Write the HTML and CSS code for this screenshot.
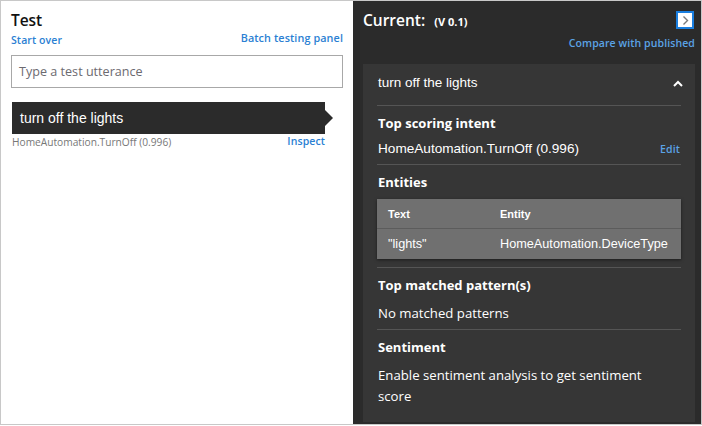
FILE: index.html
```html
<!DOCTYPE html>
<html>
<head>
<meta charset="utf-8">
<link rel="stylesheet" href="styles.css">
</head>
<body>
<div class="frame">
  <section class="left">
    <h1 class="title">Test</h1>
    <div class="links">
      <a class="link start">Start over</a>
      <a class="link batch">Batch testing panel</a>
    </div>
    <div class="input">Type a test utterance</div>
    <div class="utt">
      <div class="utt-bar">turn off the lights</div>
      <div class="utt-arrow"></div>
    </div>
    <div class="utt-meta">
      <span class="utt-intent">HomeAutomation.TurnOff (0.996)</span>
      <a class="link inspect">Inspect</a>
    </div>
  </section>
  <section class="right">
    <div class="rhead">
      <div class="cur"><span class="cur-title">Current:</span><span class="ver">(V 0.1)</span></div>
      <div class="collapse"><svg width="9" height="11" viewBox="0 0 9 11"><path d="M2.5 1.5 L6.5 5.5 L2.5 9.5" fill="none" stroke="#7a7a7a" stroke-width="1.4"/></svg></div>
    </div>
    <div class="compare"><a class="link dark">Compare with published</a></div>
    <div class="card">
      <div class="card-top">
        <span class="utt-text">turn off the lights</span>
        <svg width="10" height="7" viewBox="0 0 10 7"><path d="M1 6 L5 2 L9 6" fill="none" stroke="#fff" stroke-width="2"/></svg>
      </div>
      <div class="sec">
        <div class="sec-title">Top scoring intent</div>
        <div class="intent-row"><span class="intent">HomeAutomation.TurnOff (0.996)</span><a class="link dark edit">Edit</a></div>
      </div>
      <div class="sec">
        <div class="sec-title">Entities</div>
        <div class="table">
          <div class="trow thead"><span class="c1">Text</span><span class="c2">Entity</span></div>
          <div class="trow tbody"><span class="c1">"lights"</span><span class="c2">HomeAutomation.DeviceType</span></div>
        </div>
      </div>
      <div class="sec text-sec">
        <div class="sec-title">Top matched pattern(s)</div>
        <div class="sec-text">No matched patterns</div>
      </div>
      <div class="sec text-sec last">
        <div class="sec-title">Sentiment</div>
        <div class="sec-text wrap">Enable sentiment analysis to get sentiment score</div>
      </div>
    </div>
  </section>
</div>
</body>
</html>
```

FILE: styles.css
```css
html, body { margin: 0; padding: 0; }
body { width: 702px; height: 426px; overflow: hidden; background: #fff; font-family: "Open Sans", "Noto Sans", sans-serif; }
.frame { box-sizing: border-box; width: 702px; height: 425px; border: 1px solid #c8c8c8; display: flex; }
.left { width: 352px; box-sizing: border-box; padding: 9px 10px 0 10px; background: #fff; }
.title { margin: 0; font-size: 15.5px; font-weight: 600; color: #111; line-height: 20px; letter-spacing: -0.1px; }
.links { display: flex; justify-content: space-between; align-items: flex-start; height: 16px; }
.link { font-size: 10.5px; font-weight: 600; color: #2b7fd3; letter-spacing: 0.1px; }
.start { margin-top: 3px; }
.batch { margin-top: 0; font-size: 10.8px; }
.input { margin-top: 9px; box-sizing: border-box; height: 33px; border: 1px solid #a8a8a8; padding: 0 7px; line-height: 31px; font-size: 12.6px; color: #6c6a70; }
.utt { margin-top: 14px; display: flex; align-items: center; margin-left: 1px; }
.utt-bar { width: 313px; height: 32px; background: #2b2b2b; color: #fff; font-family: "Liberation Sans", Arial, sans-serif; font-size: 14px; line-height: 32px; padding-left: 8px; box-sizing: border-box; }
.utt-arrow { width: 0; height: 0; border-top: 8px solid transparent; border-bottom: 8px solid transparent; border-left: 8px solid #2b2b2b; }
.utt-meta { display: flex; justify-content: space-between; width: 313px; margin-left: 1px; height: 16px; }
.utt-intent { font-size: 10.2px; color: #777; margin-top: 1px; }
.inspect { font-size: 10.5px; }
.right { flex: 1; background: #2b2b2b; padding: 0 6px 2px 10px; display: flex; flex-direction: column; }
.rhead { display: flex; justify-content: space-between; align-items: flex-start; padding-top: 9px; height: 22px; }
.cur { display: flex; align-items: baseline; }
.cur-title { color: #fff; font-size: 15.5px; font-weight: 600; line-height: 20px; }
.ver { color: #fff; font-size: 11px; font-weight: 700; margin-left: 9px; }
.collapse { box-sizing: border-box; width: 18px; height: 18px; border: 2px solid #1a7fe0; background: #fff; display: flex; align-items: center; justify-content: center; margin-top: 1px; margin-right: 1px; }
.compare { text-align: right; height: 32px; line-height: 19px; }
.link.dark { color: #5ba3e6; }
.card { flex: 1; background: #363636; padding: 0 14px 0 14px; }
.card-top { display: flex; justify-content: space-between; align-items: flex-start; box-sizing: border-box; height: 42px; padding-top: 11px; border-bottom: 1px solid #555; padding-left: 1px; }
.card-top svg { margin-right: -2px; margin-top: 5px; }
.utt-text { color: #fff; font-family: "Liberation Sans", Arial, sans-serif; font-size: 13.5px; line-height: 16px; }
.sec { border-bottom: 1px solid #555; padding: 8px 0 8px 1px; }
.sec.text-sec { padding-bottom: 5px; }
.sec.last { border-bottom: 0; }
.sec-title { color: #fff; font-size: 13px; font-weight: 700; line-height: 18px; }
.intent-row { display: flex; justify-content: space-between; align-items: center; margin-top: 9px; }
.intent { color: #fff; font-family: "Liberation Sans", Arial, sans-serif; font-size: 13.6px; }
.edit { font-size: 10.5px; margin-right: 1px; }
.table { margin-top: 8px; margin-left: -1px; background: #707070; box-shadow: 0 1px 3px rgba(0,0,0,0.5); }
.trow { display: flex; align-items: center; color: #fff; font-family: "Liberation Sans", Arial, sans-serif; }
.thead { font-size: 11px; font-weight: 700; border-bottom: 1px solid #5c5c5c; height: 29px; }
.tbody { font-size: 12.7px; height: 30px; }
.c1 { width: 112px; padding-left: 11px; }
.c2 { flex: 1; }
.sec-text { color: #fff; font-size: 13.2px; line-height: 21px; margin-top: 9px; }
.sec-text.wrap { width: 290px; }
```
